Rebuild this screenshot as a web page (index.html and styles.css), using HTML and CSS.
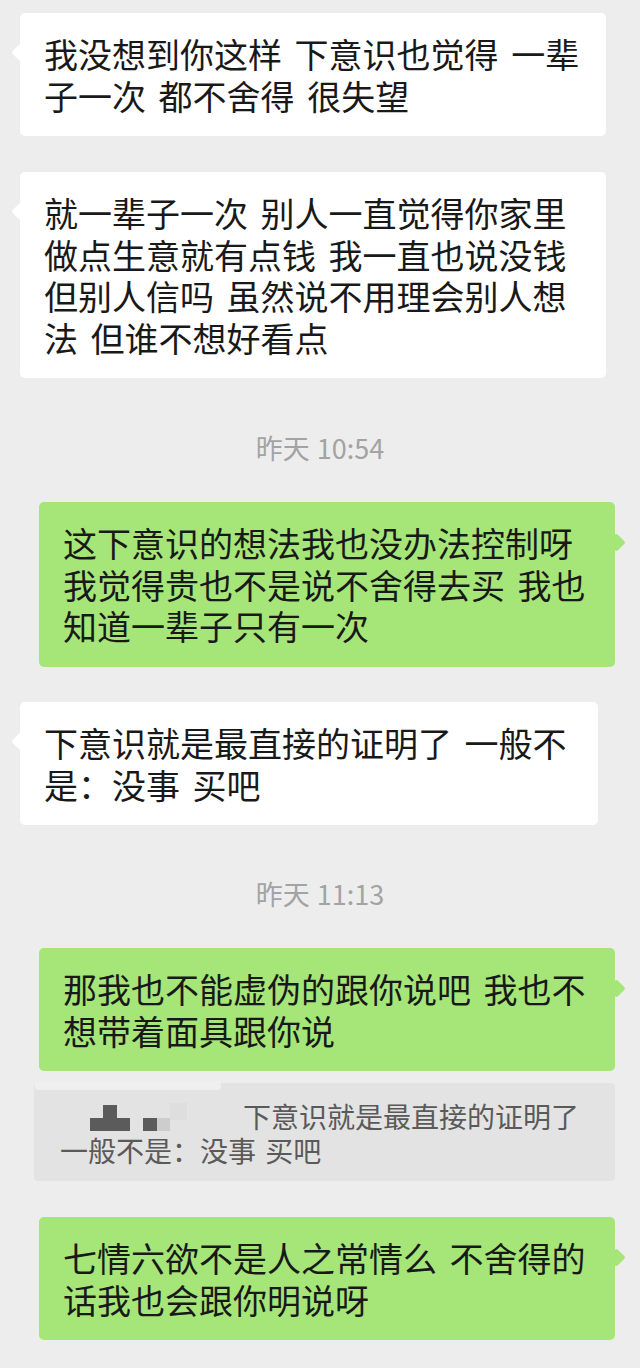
FILE: index.html
```html
<!DOCTYPE html>
<html lang="zh-CN">
<head>
<meta charset="utf-8">
<title>聊天记录</title>
<link rel="stylesheet" href="styles.css">
</head>
<body>
<main class="chat">
  <div class="bubble in w-wide first">我没想到你这样 下意识也觉得 一辈<br>子一次 都不舍得 很失望</div>
  <div class="bubble in w-wide gap-36">就一辈子一次 别人一直觉得你家里<br>做点生意就有点钱 我一直也说没钱<br>但别人信吗 虽然说不用理会别人想<br>法 但谁不想好看点</div>
  <div class="time ts-1">昨天 10:54</div>
  <div class="bubble out after-time">这下意识的想法我也没办法控制呀<br>我觉得贵也不是说不舍得去买 我也<br>知道一辈子只有一次</div>
  <div class="bubble in w-narrow gap-35">下意识就是最直接的证明了 一般不<br>是：没事 买吧</div>
  <div class="time ts-2">昨天 11:13</div>
  <div class="bubble out after-time">那我也不能虚伪的跟你说吧 我也不<br>想带着面具跟你说</div>
  <div class="quote">
    <span class="quote-smudge"></span>
    <span class="mask"><svg width="183" height="34" viewBox="0 0 183 34"><rect x="43" y="6" width="14" height="14" fill="#5b5b5b"/><rect x="30" y="19" width="40" height="13" fill="#5b5b5b"/><rect x="83" y="19" width="14" height="13" fill="#5b5b5b"/><rect x="97" y="19" width="13" height="13" fill="#cdcdcd"/><rect x="110" y="4" width="17" height="17" fill="#dedede"/></svg></span>下意识就是最直接的证明了<br>一般不是：没事 买吧
  </div>
  <div class="bubble out gap-36">七情六欲不是人之常情么 不舍得的<br>话我也会跟你明说呀</div>
</main>
</body>
</html>
```

FILE: styles.css
```css
html, body {
  margin: 0;
  padding: 0;
}

body {
  width: 640px;
  height: 1368px;
  overflow: hidden;
  background: #ededed;
  font-family: "Noto Sans CJK SC", "Noto Sans", sans-serif;
  color: #191919;
}

.chat {
  display: flex;
  flex-direction: column;
  align-items: flex-start;
  padding-top: 13px;
}

.bubble {
  position: relative;
  box-sizing: border-box;
  font-size: 34px;
  line-height: 41.5px;
  word-spacing: 5px;
  white-space: nowrap;
  padding: 20px 20px 20px 24px;
  border-radius: 5px;
}

.bubble::before {
  content: "";
  position: absolute;
  width: 13px;
  height: 13px;
  top: 32.5px;
  border-radius: 2px;
  transform: rotate(45deg);
}

.bubble.in {
  background: #ffffff;
  margin-left: 20px;
}

.bubble.in::before {
  left: -6px;
  background: #ffffff;
}

.w-wide {
  width: 586px;
}

.w-narrow {
  width: 578px;
}

.bubble.out {
  background: #a6e678;
  margin-left: 39px;
  width: 576px;
}

.bubble.out::before {
  right: -8px;
  top: 33.5px;
  background: #a6e678;
}

.first {
  margin-top: 0;
}

.gap-36 {
  margin-top: 36px;
}

.gap-35 {
  margin-top: 35.5px;
}

.time {
  align-self: center;
  font-size: 27px;
  line-height: 30px;
  color: #a3a3a3;
  word-spacing: 1px;
}

.ts-1 {
  margin-top: 55px;
}

.ts-2 {
  margin-top: 54px;
}

.after-time {
  margin-top: 39px;
}

.quote {
  position: relative;
  box-sizing: border-box;
  margin-top: 12px;
  margin-left: 34px;
  width: 581px;
  padding: 16px 20px 14px 26px;
  background: #e3e3e3;
  border-radius: 4px;
  font-size: 28px;
  line-height: 34px;
  color: #5a5a5a;
  white-space: nowrap;
  word-spacing: 3px;
}

.quote-smudge {
  position: absolute;
  left: 1px;
  top: -2px;
  width: 186px;
  height: 9px;
  background: #efefef;
  border-radius: 3px;
}

.mask {
  display: inline-block;
  width: 183px;
  height: 34px;
  vertical-align: top;
}

.mask svg {
  display: block;
}
```
